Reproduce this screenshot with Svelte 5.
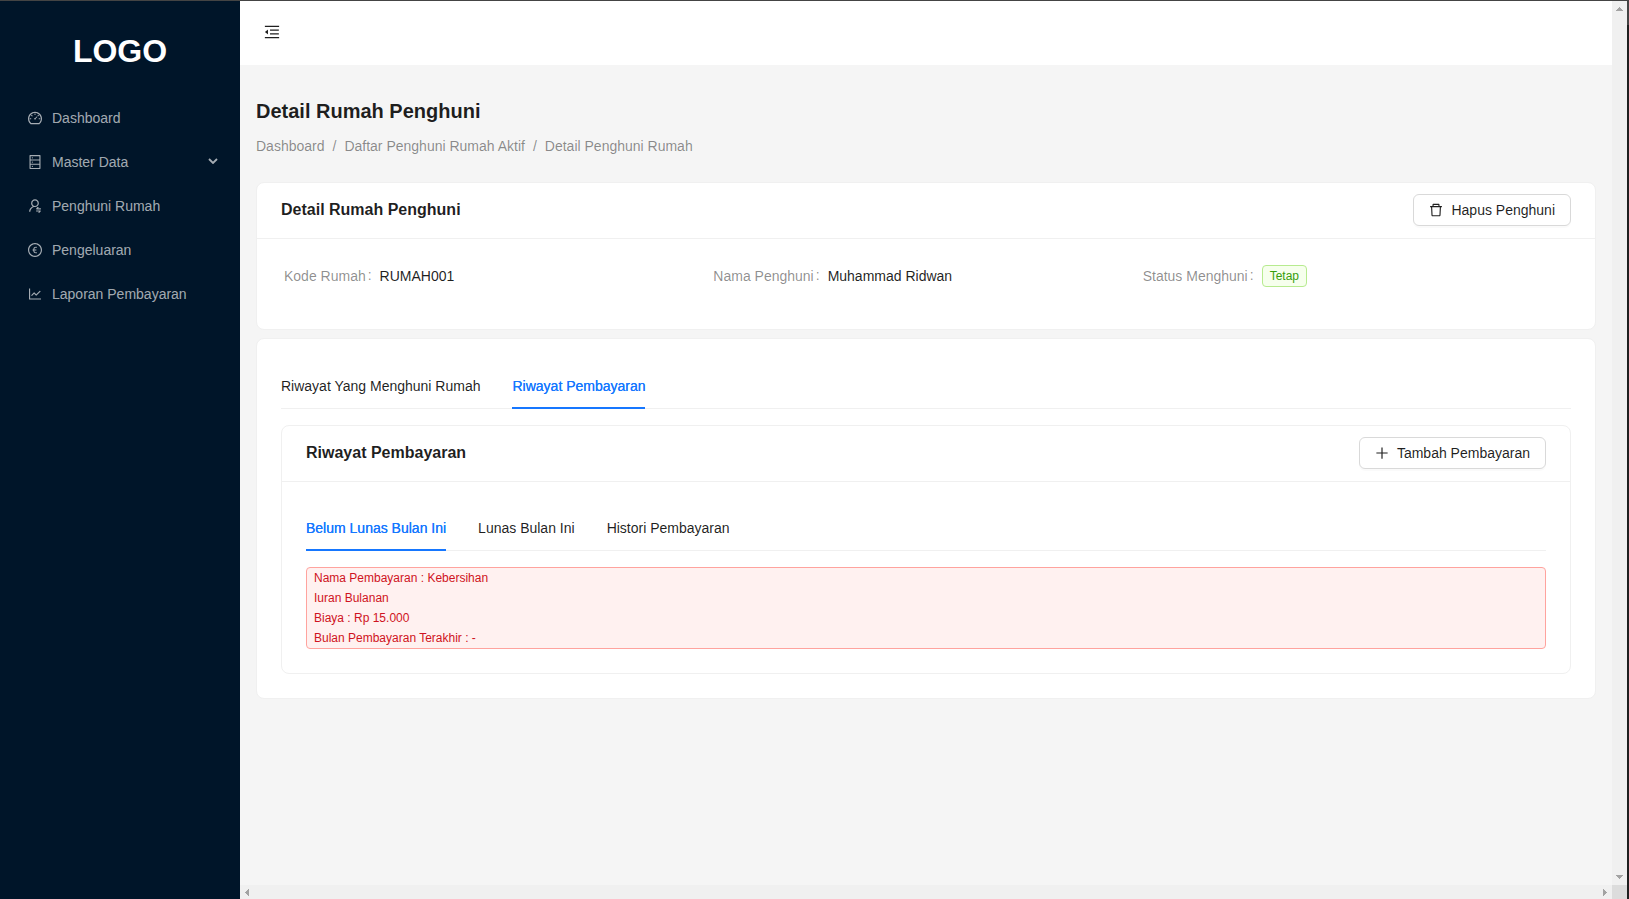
<script>
  const icons = {
    fold: 'M408 442h480c4.4 0 8-3.6 8-8v-56c0-4.4-3.6-8-8-8H408c-4.4 0-8 3.6-8 8v56c0 4.4 3.6 8 8 8zm-8 204c0 4.4 3.6 8 8 8h480c4.4 0 8-3.6 8-8v-56c0-4.4-3.6-8-8-8H408c-4.4 0-8 3.6-8 8v56zm504-486H120c-4.4 0-8 3.6-8 8v56c0 4.4 3.6 8 8 8h784c4.4 0 8-3.6 8-8v-56c0-4.4-3.6-8-8-8zm0 632H120c-4.4 0-8 3.6-8 8v56c0 4.4 3.6 8 8 8h784c4.4 0 8-3.6 8-8v-56c0-4.4-3.6-8-8-8zM115.4 518.9L271.7 642c5.8 4.6 14.4.5 14.4-6.9V388.9c0-7.4-8.5-11.5-14.4-6.9L115.4 505.1a8.74 8.74 0 000 13.8z',
    dashboard: 'M924.8 385.6a446.7 446.7 0 00-96-142.4 446.7 446.7 0 00-142.4-96C631.1 123.8 572.5 112 512 112s-119.1 11.8-174.4 35.2a446.7 446.7 0 00-142.4 96 446.7 446.7 0 00-96 142.4C75.8 440.9 64 499.5 64 560c0 132.7 58.3 257.7 159.9 343.1l1.7 1.4c5.8 4.8 13.1 7.5 20.6 7.5h531.7c7.5 0 14.8-2.7 20.6-7.5l1.7-1.4C901.7 817.7 960 692.7 960 560c0-60.5-11.9-119.1-35.2-174.4zM761.4 836H262.6A371.12 371.12 0 01140 560c0-99.4 38.7-192.8 109-263 70.3-70.3 163.7-109 263-109 99.4 0 192.8 38.7 263 109 70.3 70.3 109 163.7 109 263 0 105.6-44.5 205.5-122.6 276zM623.5 421.5a8.03 8.03 0 00-11.3 0L527.7 506c-18.7-5-39.4-.2-54.1 14.5a55.95 55.95 0 000 79.2 55.95 55.95 0 0079.2 0 55.87 55.87 0 0014.5-54.1l84.5-84.5c3.1-3.1 3.1-8.2 0-11.3l-28.3-28.3zM490 320h44c4.4 0 8-3.6 8-8v-80c0-4.4-3.6-8-8-8h-44c-4.4 0-8 3.6-8 8v80c0 4.4 3.6 8 8 8zm260 218v44c0 4.4 3.6 8 8 8h80c4.4 0 8-3.6 8-8v-44c0-4.4-3.6-8-8-8h-80c-4.4 0-8 3.6-8 8zm12.7-197.2l-31.1-31.1a8.03 8.03 0 00-11.3 0l-56.6 56.6a8.03 8.03 0 000 11.3l31.1 31.1c3.1 3.1 8.2 3.1 11.3 0l56.6-56.6c3.1-3.1 3.1-8.2 0-11.3zm-458.6-31.1a8.03 8.03 0 00-11.3 0l-31.1 31.1a8.03 8.03 0 000 11.3l56.6 56.6c3.1 3.1 8.2 3.1 11.3 0l31.1-31.1c3.1-3.1 3.1-8.2 0-11.3l-56.6-56.6zM262 530h-80c-4.4 0-8 3.6-8 8v44c0 4.4 3.6 8 8 8h80c4.4 0 8-3.6 8-8v-44c0-4.4-3.6-8-8-8z',
    database: 'M832 64H192c-17.7 0-32 14.3-32 32v832c0 17.7 14.3 32 32 32h640c17.7 0 32-14.3 32-32V96c0-17.7-14.3-32-32-32zm-600 72h560v208H232V136zm560 480H232V408h560v208zm0 272H232V680h560v208zM304 240a40 40 0 1080 0 40 40 0 10-80 0zm0 272a40 40 0 1080 0 40 40 0 10-80 0zm0 272a40 40 0 1080 0 40 40 0 10-80 0z',
    userSwitch: 'M759 335c0-137-111-248-248-248S263 198 263 335c0 82.8 40.6 156.2 103 201.2-.4.2-.7.3-.9.4-44.7 18.9-84.8 46-119.3 80.6a373.42 373.42 0 00-80.4 119.5A373.6 373.6 0 00136 874.8a8 8 0 008 8.2h59.9c4.3 0 7.9-3.5 8-7.8 2-77.2 32.9-149.5 87.6-204.3C356 614.2 431 583 511 583c137 0 248-111 248-248zM511 507c-95 0-172-77-172-172s77-172 172-172 172 77 172 172-77 172-172 172zm105 221h264c4.4 0 8-3.6 8-8v-56c0-4.4-3.6-8-8-8H703.5l47.2-60.1a8.1 8.1 0 001.7-4.9c0-4.4-3.6-8-8-8h-72.6c-4.9 0-9.5 2.3-12.6 6.1l-68.5 87.1c-4.4 5.6-6.8 12.6-6.8 19.8.1 17.7 14.4 32 32.1 32zm240 64H592c-4.4 0-8 3.6-8 8v56c0 4.4 3.6 8 8 8h176.5l-47.2 60.1a8.1 8.1 0 00-1.7 4.9c0 4.4 3.6 8 8 8h72.6c4.9 0 9.5-2.3 12.6-6.1l68.5-87.1c4.4-5.6 6.8-12.6 6.8-19.8-.1-17.7-14.4-32-32.1-32z',
    euro: 'M512 64C264.6 64 64 264.6 64 512s200.6 448 448 448 448-200.6 448-448S759.4 64 512 64zm0 820c-205.4 0-372-166.6-372-372s166.6-372 372-372 372 166.6 372 372-166.6 372-372 372zM632 318v54c-18-6-36-9-56-9-55 0-94 32-104 93h128v40H466v40h134v40H472c12 61 50 91 105 91 22 0 40-3 57-9v55c-18 5-38 7-62 7-94 0-155-52-169-144h-50v-40h46v-40h-46v-40h50c15-90 77-146 169-146 23 0 42 3 60 8z',
    lineChart: 'M888 792H200V168c0-4.4-3.6-8-8-8h-56c-4.4 0-8 3.6-8 8v688c0 4.4 3.6 8 8 8h752c4.4 0 8-3.6 8-8v-56c0-4.4-3.6-8-8-8zM305.8 637.7c3.1 3.1 8.1 3.1 11.3 0l138.3-137.6L583 628.5c3.1 3.1 8.2 3.1 11.3 0l275.4-275.3c3.1-3.1 3.1-8.2 0-11.3l-39.6-39.6a8.03 8.03 0 00-11.3 0l-230 229.9L461.4 404a8.03 8.03 0 00-11.3 0L266.3 586.7a8.03 8.03 0 000 11.3l39.5 39.7z',
    trash: 'M360 184h-8c4.4 0 8-3.6 8-8v8h304v-8c0 4.4 3.6 8 8 8h-8v72h72v-80c0-35.3-28.7-64-64-64H352c-35.3 0-64 28.7-64 64v80h72v-72zm504 72H160c-17.7 0-32 14.3-32 32v32c0 4.4 3.6 8 8 8h60.4l24.7 523c1.6 34.1 29.8 61 63.9 61h454c34.2 0 62.3-26.8 63.9-61l24.7-523H888c4.4 0 8-3.6 8-8v-32c0-17.7-14.3-32-32-32zM731.3 840H292.7l-24.2-512h487l-24.2 512z',
    plus: 'M482 152h60q8 0 8 8v704q0 8-8 8h-60q-8 0-8-8V160q0-8 8-8zM192 474h672q8 0 8 8v60q0 8-8 8H160q-8 0-8-8v-60q0-8 8-8z'
  };

  const menu = [
    { label: 'Dashboard', icon: 'dashboard' },
    { label: 'Master Data', icon: 'database', expandable: true },
    { label: 'Penghuni Rumah', icon: 'userSwitch' },
    { label: 'Pengeluaran', icon: 'euro' },
    { label: 'Laporan Pembayaran', icon: 'lineChart' }
  ];
  const crumbs = ['Dashboard', 'Daftar Penghuni Rumah Aktif', 'Detail Penghuni Rumah'];
  const details = [
    { label: 'Kode Rumah', value: 'RUMAH001' },
    { label: 'Nama Penghuni', value: 'Muhammad Ridwan' },
    { label: 'Status Menghuni', value: 'Tetap', tag: true }
  ];
  const mainTabs = ['Riwayat Yang Menghuni Rumah', 'Riwayat Pembayaran'];
  const paymentTabs = ['Belum Lunas Bulan Ini', 'Lunas Bulan Ini', 'Histori Pembayaran'];
  const unpaid = [
    'Nama Pembayaran : Kebersihan',
    'Iuran Bulanan',
    'Biaya : Rp 15.000',
    'Bulan Pembayaran Terakhir : -'
  ];
  let mainTab = $state(1);
  let paymentTab = $state(0);
</script>

{#snippet icon(name)}
  <svg class="icon" viewBox="64 64 896 896" aria-hidden="true"><path d={icons[name]} /></svg>
{/snippet}

<div class="window">
  <aside class="sider">
    <div class="logo">LOGO</div>
    <nav class="menu">
      {#each menu as item}
        <a class="menu-item" href="#top">
          {@render icon(item.icon)}
          <span class="menu-label">{item.label}</span>
          {#if item.expandable}
            <svg class="arrow" viewBox="0 0 10 6" aria-hidden="true"><path d="M1 1l4 4 4-4" /></svg>
          {/if}
        </a>
      {/each}
    </nav>
  </aside>

  <div class="viewport">
    <div class="page">
      <header class="topbar">{@render icon('fold')}</header>
      <main class="content">
        <h1>Detail Rumah Penghuni</h1>
        <div class="breadcrumb">
          {#each crumbs as crumb, i}
            {#if i > 0}<span class="sep">/</span>{/if}<span>{crumb}</span>
          {/each}
        </div>

        <section class="card">
          <div class="card-head">
            <h2>Detail Rumah Penghuni</h2>
            <button class="btn">{@render icon('trash')}<span>Hapus Penghuni</span></button>
          </div>
          <div class="card-body details">
            {#each details as d}
              <div class="detail">
                <span class="detail-label">{d.label}<span class="colon">:</span></span>
                {#if d.tag}<span class="tag">{d.value}</span>{:else}<span>{d.value}</span>{/if}
              </div>
            {/each}
          </div>
        </section>

        <section class="card">
          <div class="card-body">
            <div class="tabs">
              {#each mainTabs as tab, i}
                <button class="tab" class:active={mainTab === i} onclick={() => (mainTab = i)}>{tab}</button>
              {/each}
            </div>

            <section class="card">
              <div class="card-head">
                <h2>Riwayat Pembayaran</h2>
                <button class="btn">{@render icon('plus')}<span>Tambah Pembayaran</span></button>
              </div>
              <div class="card-body">
                <div class="tabs">
                  {#each paymentTabs as tab, i}
                    <button class="tab" class:active={paymentTab === i} onclick={() => (paymentTab = i)}>{tab}</button>
                  {/each}
                </div>
                <div class="notice">
                  {#each unpaid as line}<div>{line}</div>{/each}
                </div>
              </div>
            </section>
          </div>
        </section>
      </main>
    </div>
    <div class="scroll vertical">
      <svg width="7" height="4" viewBox="0 0 7 4" shape-rendering="crispEdges"><path d="M3 0h1v1h1v1h1v1h1v1H0V3h1V2h1V1h1z" /></svg>
      <svg width="7" height="4" viewBox="0 0 7 4" shape-rendering="crispEdges"><path d="M0 0h7v1H6v1H5v1H4v1H3V3H2V2H1V1H0z" /></svg>
    </div>
    <div class="scroll horizontal">
      <svg width="4" height="7" viewBox="0 0 4 7" shape-rendering="crispEdges"><path d="M4 0v7H3V6H2V5H1V4H0V3h1V2h1V1h1V0z" /></svg>
      <svg width="4" height="7" viewBox="0 0 4 7" shape-rendering="crispEdges"><path d="M0 0v7h1V6h1V5h1V4h1V3H3V2H2V1H1V0z" /></svg>
    </div>
    <div class="corner"></div>
  </div>
  <div class="edge"></div>
</div>

<style>
  :global(body) {
    margin: 0;
    overflow: hidden;
  }
  .window {
    box-sizing: border-box;
    width: 100vw;
    height: 100vh;
    display: grid;
    grid-template-columns: 240px 1fr 2px;
    border-top: 1px solid #444;
    font: 14px/22px "Liberation Sans", Arial, sans-serif;
    color: rgba(0, 0, 0, 0.88);
    background: #f5f5f5;
  }
  .window * {
    box-sizing: border-box;
  }
  .icon {
    display: block;
    flex: none;
    width: 14px;
    height: 14px;
    fill: currentColor;
  }
  .sider {
    background: #001529;
    color: rgba(255, 255, 255, 0.65);
  }
  .logo {
    height: 97px;
    padding-top: 2px;
    display: flex;
    align-items: center;
    justify-content: center;
    color: #fff;
    font-size: 32px;
    font-weight: 700;
  }
  .menu {
    display: flex;
    flex-direction: column;
    gap: 4px;
    padding: 0 4px;
  }
  .menu-item {
    height: 40px;
    padding: 0 18px 0 24px;
    display: flex;
    align-items: center;
    gap: 10px;
    color: inherit;
    text-decoration: none;
  }
  .menu-label {
    flex: 1;
  }
  .arrow {
    width: 10px;
    height: 6px;
    margin-bottom: 2px;
    fill: none;
    stroke: currentColor;
    stroke-width: 1.8;
  }
  .viewport {
    display: grid;
    grid-template: 1fr 14px / 1fr 15px;
    min-width: 0;
  }
  .topbar {
    height: 64px;
    padding: 0 24px 2px;
    display: flex;
    align-items: center;
    background: #fff;
  }
  .topbar .icon {
    width: 16px;
    height: 16px;
  }
  .content {
    display: flex;
    flex-direction: column;
    padding: 32px 16px 0;
  }
  h1, h2 {
    margin: 0;
    font-weight: 700;
  }
  h1 {
    font-size: 20px;
    line-height: 28px;
  }
  .breadcrumb {
    display: flex;
    gap: 8px;
    margin: 10px 0 25px;
    color: rgba(0, 0, 0, 0.45);
  }
  .card {
    background: #fff;
    border: 1px solid #f0f0f0;
    border-radius: 8px;
  }
  .card + .card {
    margin-top: 8px;
  }
  .card-head {
    height: 56px;
    margin-bottom: -1px;
    padding: 0 24px 1px;
    display: flex;
    align-items: center;
    justify-content: space-between;
    border-bottom: 1px solid #f0f0f0;
  }
  h2 {
    font-size: 16px;
    line-height: 24px;
  }
  .card-body {
    padding: 24px;
  }
  .btn {
    height: 32px;
    padding: 0 15px;
    display: flex;
    align-items: center;
    gap: 8px;
    font: inherit;
    color: inherit;
    background: #fff;
    border: 1px solid #d9d9d9;
    border-radius: 6px;
    box-shadow: 0 2px 0 rgba(0, 0, 0, 0.02);
  }
  .details {
    height: 91px;
    padding: 27px 25px 0 27px;
    display: grid;
    grid-template-columns: repeat(3, 1fr);
    align-items: start;
    gap: 2px;
  }
  .detail {
    display: flex;
    align-items: center;
  }
  .detail-label {
    color: rgba(0, 0, 0, 0.45);
  }
  .colon {
    position: relative;
    top: -1px;
    margin: 0 8px 0 2px;
  }
  .tag {
    padding: 0 7px;
    border: 1px solid #b7eb8f;
    border-radius: 4px;
    background: #f6ffed;
    color: #389e0d;
    font-size: 12px;
    line-height: 20px;
  }
  .tabs {
    height: 46px;
    margin-bottom: 16px;
    display: flex;
    gap: 32px;
    border-bottom: 1px solid #f0f0f0;
  }
  .tab {
    position: relative;
    height: 46px;
    padding: 0;
    font: inherit;
    color: inherit;
    background: none;
    border: 0;
  }
  .tab.active {
    color: #1677ff;
    text-shadow: 0 0 0.25px currentColor;
  }
  .tab.active::after {
    content: "";
    position: absolute;
    left: -0.3px;
    bottom: 0;
    width: 100%;
    height: 2px;
    background: #1677ff;
  }
  .notice {
    padding: 0 7px;
    border: 1px solid #ffa39e;
    border-radius: 4px;
    background: #fff1f0;
    color: #cf1322;
    font-size: 12px;
    line-height: 20px;
  }
  .scroll {
    display: flex;
    justify-content: space-between;
    align-items: center;
    background: #f0f0f0;
  }
  .scroll svg {
    fill: #a3a3a3;
  }
  .vertical {
    flex-direction: column;
    padding: 6px 0;
  }
  .horizontal {
    padding: 1px 5px 0;
  }
  .corner {
    background: #dcdcdc;
  }
  .edge {
    background: linear-gradient(#444 24px, #1f1f1f 24px);
  }
</style>
